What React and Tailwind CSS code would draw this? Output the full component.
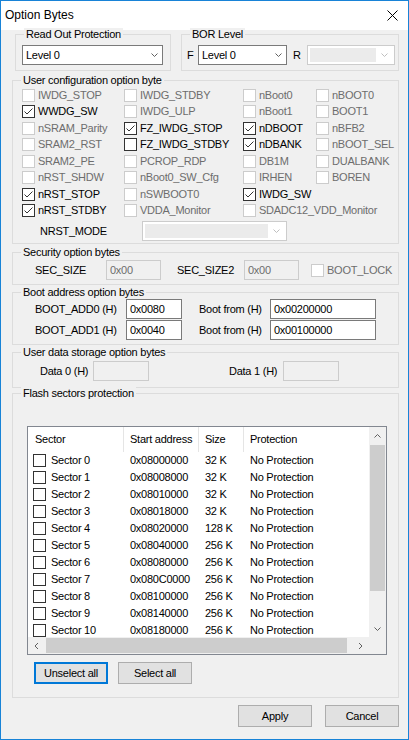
import React from "react";

const config = [
  [
    { l: "IWDG_STOP", d: true },
    { l: "IWDG_STDBY", d: true },
    { l: "nBoot0", d: true },
    { l: "nBOOT0", d: true },
  ],
  [
    { l: "WWDG_SW", c: true },
    { l: "IWDG_ULP", d: true },
    { l: "nBoot1", d: true },
    { l: "BOOT1", d: true },
  ],
  [
    { l: "nSRAM_Parity", d: true },
    { l: "FZ_IWDG_STOP", c: true },
    { l: "nDBOOT", c: true },
    { l: "nBFB2", d: true },
  ],
  [
    { l: "SRAM2_RST", d: true },
    { l: "FZ_IWDG_STDBY" },
    { l: "nDBANK", c: true },
    { l: "nBOOT_SEL", d: true },
  ],
  [
    { l: "SRAM2_PE", d: true },
    { l: "PCROP_RDP", d: true },
    { l: "DB1M", d: true },
    { l: "DUALBANK", d: true },
  ],
  [
    { l: "nRST_SHDW", d: true },
    { l: "nBoot0_SW_Cfg", d: true },
    { l: "IRHEN", d: true },
    { l: "BOREN", d: true },
  ],
  [
    { l: "nRST_STOP", c: true },
    { l: "nSWBOOT0", d: true },
    { l: "IWDG_SW", c: true },
    null,
  ],
  [
    { l: "nRST_STDBY", c: true },
    { l: "VDDA_Monitor", d: true },
    { l: "SDADC12_VDD_Monitor", d: true, span: true },
  ],
];

const sectors = [
  ["Sector 0", "0x08000000", "32 K"],
  ["Sector 1", "0x08008000", "32 K"],
  ["Sector 2", "0x08010000", "32 K"],
  ["Sector 3", "0x08018000", "32 K"],
  ["Sector 4", "0x08020000", "128 K"],
  ["Sector 5", "0x08040000", "256 K"],
  ["Sector 6", "0x08080000", "256 K"],
  ["Sector 7", "0x080C0000", "256 K"],
  ["Sector 8", "0x08100000", "256 K"],
  ["Sector 9", "0x08140000", "256 K"],
  ["Sector 10", "0x08180000", "256 K"],
];

function Chevron({ color = "#606060", dir = "down" }) {
  const rot = { down: 0, up: 180, left: 90, right: -90 }[dir];
  return (
    <svg width="7" height="4" viewBox="0 0 7 4" style={{ transform: `rotate(${rot}deg)` }}>
      <path d="M0.5 0.5 L3.5 3.5 L6.5 0.5" fill="none" stroke={color} strokeWidth="1" />
    </svg>
  );
}

function Check({ checked, disabled }) {
  return (
    <span
      className={
        "w-[13px] h-[13px] border bg-white flex items-center justify-center shrink-0 " +
        (disabled ? "border-[#cccccc]" : "border-[#333333]")
      }
    >
      {checked && (
        <svg width="11" height="11" viewBox="0 0 11 11">
          <path d="M1.5 5.5 L4 8 L9.5 2.5" fill="none" stroke="#333333" strokeWidth="1" />
        </svg>
      )}
    </span>
  );
}

function CheckItem({ item }) {
  if (!item) return <div />;
  return (
    <div className={"flex items-center gap-[3px] " + (item.span ? "col-span-2" : "")}>
      <Check checked={item.c} disabled={item.d} />
      <span className={item.d ? "text-[#6d6d6d]" : "text-black"}>{item.l}</span>
    </div>
  );
}

function Group({ title, className, children }) {
  return (
    <div className={"relative border border-[#dcdcdc] " + className}>
      <span className="absolute left-[8px] top-[-7px] bg-[#f0f0f0] px-[2px] leading-[13px] whitespace-nowrap">
        {title}
      </span>
      {children}
    </div>
  );
}

function Combo({ value, disabled, className }) {
  if (disabled) {
    return (
      <div className={"h-[20px] border border-[#cccccc] bg-white p-[2px] flex " + className}>
        <div className="flex-1 bg-[#ebebeb]" />
        <div className="w-[16px] flex items-center justify-center">
          <Chevron color="#bfbfbf" />
        </div>
      </div>
    );
  }
  return (
    <div className={"h-[20px] border border-[#7a7a7a] bg-white pl-[3px] pr-[4px] flex items-center justify-between " + className}>
      <span>{value}</span>
      <Chevron />
    </div>
  );
}

function Field({ value, disabled, className }) {
  return (
    <div
      className={
        "h-[20px] border pl-[3px] flex items-center shrink-0 " +
        (disabled ? "border-[#cccccc] bg-[#f0f0f0] text-[#6d6d6d] " : "border-[#7a7a7a] bg-white ") +
        className
      }
    >
      {value}
    </div>
  );
}

function Button({ children, focused, className }) {
  return (
    <div
      className={
        "w-[74px] h-[22px] bg-[#e1e1e1] flex items-center justify-center " +
        (focused ? "border-2 border-[#0078d7] " : "border border-[#adadad] ") +
        className
      }
    >
      {children}
    </div>
  );
}

function SectorList() {
  return (
    <div className="ml-[14px] w-[360px] h-[229px] border border-[#828790] bg-white flex flex-col">
      <div className="flex h-[210px]">
        <div className="w-[341px] overflow-hidden">
          <div className="flex h-[25px] items-stretch">
            <div className="w-[96px] border-r border-[#e5e5e5] pl-[7px] flex items-center">Sector</div>
            <div className="w-[75px] border-r border-[#e5e5e5] pl-[6px] flex items-center">Start address</div>
            <div className="w-[45px] border-r border-[#e5e5e5] pl-[6px] flex items-center">Size</div>
            <div className="flex-1 pl-[6px] flex items-center">Protection</div>
          </div>
          {sectors.map(([name, addr, size]) => (
            <div key={name} className="flex h-[17px] items-center whitespace-nowrap">
              <div className="w-[96px] pl-[5px] flex items-center gap-[5px]">
                <Check />
                <span>{name}</span>
              </div>
              <div className="w-[75px] pl-[6px]">{addr}</div>
              <div className="w-[45px] pl-[6px]">{size}</div>
              <div className="flex-1 pl-[6px]">No Protection</div>
            </div>
          ))}
        </div>
        <div className="w-[17px] bg-[#f0f0f0] flex flex-col">
          <div className="h-[17px] flex items-center justify-center">
            <Chevron dir="up" />
          </div>
          <div className="mt-[1px] mx-[1px] h-[146px] bg-[#cdcdcd]" />
          <div className="flex-1" />
          <div className="h-[17px] flex items-center justify-center">
            <Chevron dir="down" />
          </div>
        </div>
      </div>
      <div className="flex h-[17px] bg-[#f0f0f0]">
        <div className="w-[17px] flex items-center justify-center">
          <Chevron dir="left" />
        </div>
        <div className="ml-[1px] my-[1px] w-[301px] bg-[#cdcdcd]" />
        <div className="flex-1" />
        <div className="w-[17px] flex items-center justify-center">
          <Chevron dir="right" />
        </div>
        <div className="w-[17px]" />
      </div>
    </div>
  );
}

export default function App() {
  return (
    <div className="w-[409px] h-[740px] border border-[#1883d7] bg-[#f0f0f0] flex flex-col text-[11px] leading-[13px] text-black font-['Liberation_Sans',Arial,sans-serif] select-none overflow-hidden">
      {/* Title bar */}
      <div className="h-[29px] shrink-0 bg-white flex items-center justify-between pl-[4px] pr-[10px] text-[12px]">
        <span>Option Bytes</span>
        <svg width="11" height="11" viewBox="0 0 11 11">
          <path d="M0.5 0.5 L10.5 10.5 M10.5 0.5 L0.5 10.5" stroke="#000" strokeWidth="1" />
        </svg>
      </div>

      <div className="flex flex-col pl-[11px] pr-[9px] pt-[4px] tracking-[-0.25px]">
        {/* Read out + BOR */}
        <div className="flex">
          <Group title="Read Out Protection" className="ml-[3px] w-[156px] h-[37px]">
            <div className="pl-[6px] pt-[10px]">
              <Combo value="Level 0" className="w-[141px]" />
            </div>
          </Group>
          <Group title="BOR Level" className="ml-[10px] flex-1 h-[37px]">
            <div className="pl-[5px] pt-[10px] flex items-center">
              <span className="w-[11px]">F</span>
              <Combo value="Level 0" className="w-[89px]" />
              <span className="ml-[6px] w-[14px]">R</span>
              <Combo disabled className="w-[88px]" />
            </div>
          </Group>
        </div>

        {/* User configuration */}
        <Group title="User configuration option byte" className="mt-[9px] h-[164px]">
          <div className="pt-[6px] pl-[9px] grid grid-cols-[102px_119px_73px_1fr] auto-rows-[16.5px] items-center whitespace-nowrap">
            {config.map((row, i) => row.map((item, j) => <CheckItem key={i + "-" + j} item={item} />))}
          </div>
          <div className="mt-[2px] pl-[27px] flex items-center">
            <span className="w-[102px]">NRST_MODE</span>
            <Combo disabled className="w-[145px]" />
          </div>
        </Group>

        {/* Security */}
        <Group title="Security option bytes" className="mt-[8px] h-[33px]">
          <div className="pt-[7px] pl-[22px] flex items-center h-[27px] whitespace-nowrap">
            <span className="w-[71px]">SEC_SIZE</span>
            <Field value="0x00" disabled className="w-[55px]" />
            <span className="ml-[16px] w-[67px]">SEC_SIZE2</span>
            <Field value="0x00" disabled className="w-[55px]" />
            <div className="ml-[12px] flex items-center gap-[3px]">
              <Check disabled />
              <span className="text-[#6d6d6d]">BOOT_LOCK</span>
            </div>
          </div>
        </Group>

        {/* Boot address */}
        <Group title="Boot address option bytes" className="mt-[7px] h-[53px]">
          <div className="pt-[6px] pl-[22px] flex flex-col gap-[1px] whitespace-nowrap">
            {[
              ["BOOT_ADD0 (H)", "0x0080", "0x00200000"],
              ["BOOT_ADD1 (H)", "0x0040", "0x00100000"],
            ].map(([l, a, b]) => (
              <div key={l} className="flex items-center h-[20px]">
                <span className="w-[91px]">{l}</span>
                <Field value={a} className="w-[56px]" />
                <span className="ml-[17px] w-[71px]">Boot from (H)</span>
                <Field value={b} className="w-[106px]" />
              </div>
            ))}
          </div>
        </Group>

        {/* User data */}
        <Group title="User data storage option bytes" className="mt-[7px] h-[36px]">
          <div className="pt-[8px] pl-[27px] flex items-center whitespace-nowrap">
            <span className="w-[53px]">Data 0 (H)</span>
            <Field disabled className="w-[56px]" />
            <span className="ml-[80px] w-[54px]">Data 1 (H)</span>
            <Field disabled className="w-[56px]" />
          </div>
        </Group>

        {/* Flash sectors */}
        <Group title="Flash sectors protection" className="mt-[5px] h-[305px]">
          <div className="pt-[32px]">
            <SectorList />
            <div className="mt-[7px] pl-[21px] flex gap-[10px]">
              <Button focused>Unselect all</Button>
              <Button>Select all</Button>
            </div>
          </div>
        </Group>

        {/* Dialog buttons */}
        <div className="mt-[7px] flex justify-end gap-[13px]">
          <Button>Apply</Button>
          <Button>Cancel</Button>
        </div>
      </div>
    </div>
  );
}
